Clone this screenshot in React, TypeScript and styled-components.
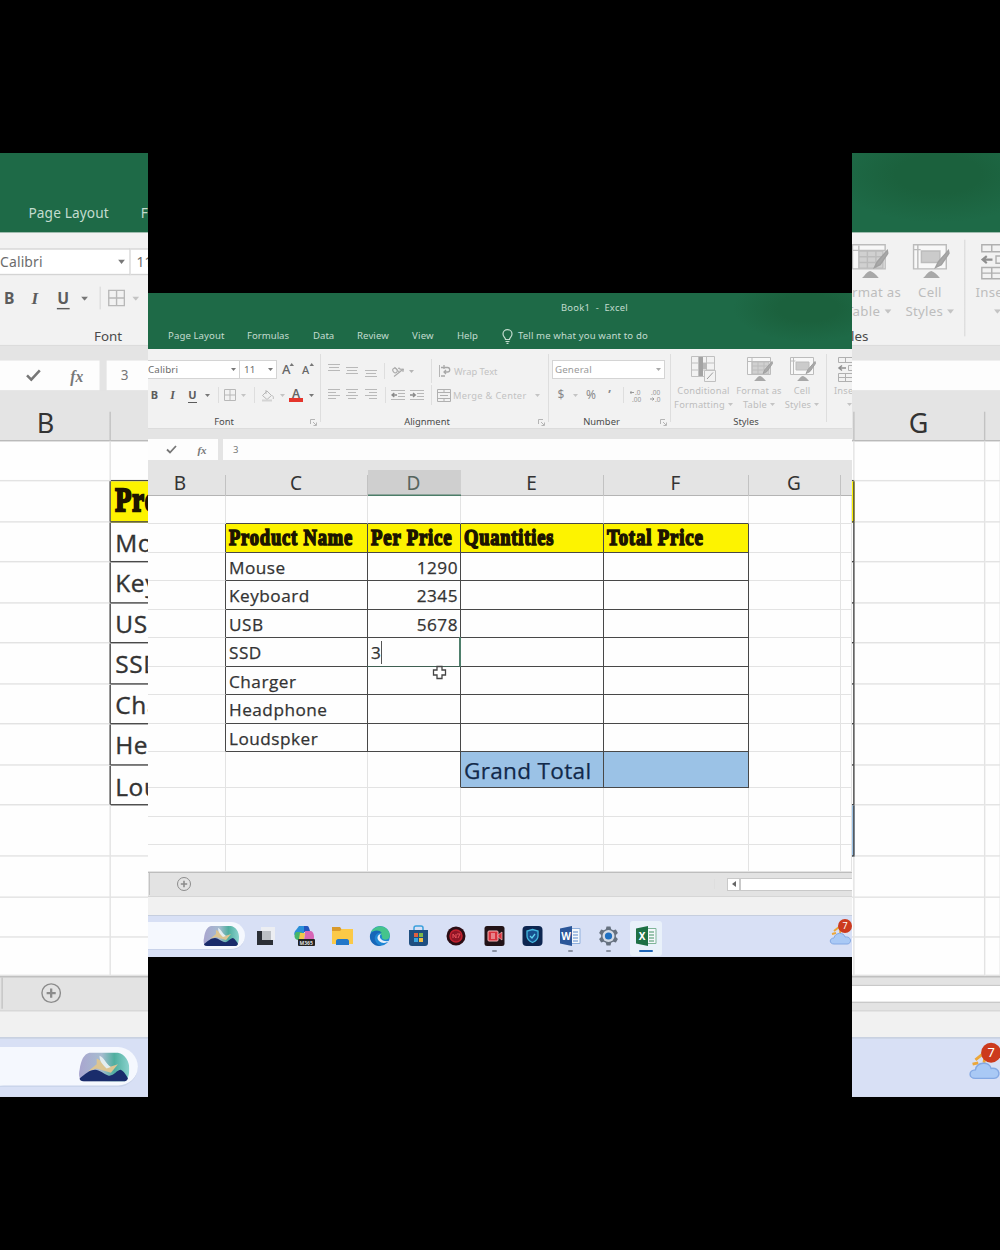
import type { ReactNode } from 'react';
import styled, { createGlobalStyle } from 'styled-components';

const GlobalStyle = createGlobalStyle`
  * {
    box-sizing: border-box;
  }

  body {
    margin: 0;
    background: #000;
  }
`;

const UI_FONT = "'Noto Sans', 'Open Sans', sans-serif";
const CELL_FONT = "'Open Sans', 'Noto Sans', sans-serif";

const Stage = styled.div`
  display: grid;
  grid-template-columns: 148px 704px 148px;
  width: 1000px;
  height: 1250px;
  background: #000;
  overflow: hidden;
`;

const Front = styled.div`
  padding-top: 293px;
`;

// enlarged slice of the same window, cropped to the strip beside it
const Strip = styled.div<{ $side: 'left' | 'right' }>`
  display: flex;
  justify-content: ${props => props.$side === 'left' ? 'flex-start' : 'flex-end'};
  align-items: flex-start;
  height: 1250px;
  padding-top: 153px;
  overflow: hidden;

  > * {
    transform: translateX(${props => props.$side === 'left' ? 0 : 1}px) scale(1.4215);
    transform-origin: top ${props => props.$side};
  }
`;

const Window = styled.div`
  flex: none;
  width: 704px;
  height: 663.5px;
  overflow: hidden;
  position: relative;
  display: flex;
  flex-direction: column;
  background: #e4e4e4;
  font-family: ${UI_FONT};
`;

/* ---------- title + tabs ---------- */

const Header = styled.header`
  height: 56px;
  flex: none;
  background:
    radial-gradient(ellipse 75px 34px at 660px 15px, #1b613d 40%, transparent 100%),
    #1e6a47;
  color: #c3dccf;
`;

const Title = styled.div`
  height: 29px;
  line-height: 29px;
  padding-left: 413px;
  font-size: 9.4px;
  letter-spacing: 0.28px;
  white-space: pre;
`;

const Tabs = styled.nav`
  display: grid;
  grid-template-columns: 79px 66px 44px 55px 45px 45px 16px auto;
  padding: 1px 0 0 20px;
  height: 27px;
  align-items: center;
  font-size: 9.6px;
  line-height: 26px;
  white-space: nowrap;

  svg {
    display: block;
  }
`;

const Tab = styled.span<{ $spacing?: number }>`
  letter-spacing: ${props => props.$spacing ?? 0}px;
`;

/* ---------- ribbon ---------- */

const Ribbon = styled.div`
  display: flex;
  flex: none;
  height: 80px;
  background: #f2f2f2;
  border-bottom: 1px solid #dcdcdc;
`;

const Group = styled.section<{ $width: number }>`
  width: ${props => props.$width}px;
  flex: none;
  height: 79px;
  padding-top: 10px;
  overflow: hidden;
  background: linear-gradient(#dedede, #dedede) right 5px / 1px 68px no-repeat;
`;

const ToolRow = styled.div<{ $cols: string; $indent?: number }>`
  display: grid;
  grid-template-columns: ${props => props.$cols};
  padding-left: ${props => props.$indent ?? 0}px;
  height: 20px;
  margin-bottom: 6px;
  align-items: center;
  justify-items: center;

  svg {
    display: block;
  }
`;

const GroupFooter = styled.div<{ $shift?: number }>`
  position: relative;
  height: 14px;
  margin-top: 10px;
  line-height: 14px;
  font-size: 9.4px;
  text-align: center;
  color: #4a4a4a;
  padding-right: ${props => props.$shift ?? 0}px;

  svg {
    position: absolute;
    right: 4px;
    top: 4px;
  }
`;

const ComboBox = styled.div<{ $dim?: boolean; $inset?: number }>`
  display: flex;
  justify-content: space-between;
  align-items: center;
  justify-self: stretch;
  height: 19px;
  padding: 0 3px 0 ${props => props.$inset ?? 0}px;
  background: #fff;
  border: 1px solid #d4d4d4;
  border-left-width: ${props => props.$dim ? '1px' : 0};
  font-size: 9.8px;
  letter-spacing: 0.1px;
  color: ${props => props.$dim ? '#9a9a9a' : '#6c6c6c'};
`;

const Glyph = styled.span<{ $size?: number; $color?: string; $bold?: boolean; $italic?: boolean; $line?: boolean }>`
  font-size: ${props => props.$size ?? 11}px;
  line-height: 14px;
  color: ${props => props.$color ?? '#5c5c5c'};
  font-weight: ${props => props.$bold ? 700 : 400};
  font-style: ${props => props.$italic ? 'italic' : 'normal'};
  font-family: ${props => props.$italic ? "'Liberation Serif', serif" : 'inherit'};
  border-bottom: ${props => props.$line ? '1px solid #5c5c5c' : 'none'};
  white-space: nowrap;
`;

const FontColor = styled.span`
  width: 14px;
  height: 14px;
  border-bottom: 4px solid #e5352c;
  font-size: 12px;
  line-height: 11px;
  font-weight: 600;
  text-align: center;
  color: #666;
`;

const Divider = styled.i<{ $height?: number }>`
  width: 1px;
  height: ${props => props.$height ?? 16}px;
  background: #dedede;
`;

const DimLabel = styled.span<{ $spacing?: number }>`
  justify-self: start;
  font-size: 9.3px;
  letter-spacing: ${props => props.$spacing ?? 0}px;
  color: #c2c2c2;
  white-space: nowrap;
`;

const BigButtons = styled.div<{ $cols: string; $indent: number }>`
  display: grid;
  grid-template-columns: ${props => props.$cols};
  padding-left: ${props => props.$indent}px;
  height: 50px;
  margin-top: -4px;
`;

const BigButton = styled.div`
  display: flex;
  flex-direction: column;
  align-items: center;
  font-size: 9.3px;
  line-height: 14px;
  letter-spacing: 0.2px;
  text-align: center;
  white-space: nowrap;
  color: #bdbdbd;

  > svg {
    flex: none;
    margin-bottom: 1px;
  }

  span svg {
    margin-left: 3px;
    vertical-align: 2px;
  }
`;

/* ---------- formula bar ---------- */

const FormulaBar = styled.div`
  display: grid;
  grid-template-columns: 70px 1fr;
  column-gap: 5px;
  flex: none;
  height: 31px;
  padding-top: 10px;
  background: #e4e4e4;
`;

const FormulaTools = styled.div`
  display: grid;
  grid-template-columns: 46px 16px;
  justify-items: center;
  align-items: center;
  background: #fdfdfd;
`;

const FormulaInput = styled.div`
  padding-left: 10px;
  line-height: 21px;
  font-size: 9.5px;
  color: #777;
  background: #fdfdfd;
`;

/* ---------- sheet ---------- */

const COL_WIDTHS = [78, 142, 93, 143, 145, 92, 11];
const COLUMNS = COL_WIDTHS.map(w => `${w}px`).join(' ');

const ColumnHeads = styled.div`
  display: grid;
  grid-template-columns: ${COLUMNS};
  flex: none;
  height: 36px;
  padding-top: 10px;
  background: #e4e4e4;
  border-bottom: 1px solid #b4b4b4;
`;

const ColumnHead = styled.div<{ $active?: boolean; $shift?: number }>`
  padding-right: ${props => props.$shift ?? 2}px;
  text-align: center;
  font-family: ${UI_FONT};
  font-size: 19px;
  line-height: 26px;
  color: ${props => props.$active ? '#56645d' : '#333'};
  background: ${props => props.$active
    ? '#cfcfcf'
    : 'linear-gradient(#c2c2c2, #c2c2c2) right 5px / 1px 21px no-repeat'};
  box-shadow: ${props => props.$active ? 'inset 0 -1.5px 0 #4c7d68' : 'none'};
`;

const Sheet = styled.div`
  display: grid;
  flex: none;
  grid-template-columns: ${COLUMNS};
  grid-template-rows: 28px 29px 28px 29px 28px 29px 28px 29px 28px 36px 29px 28px 27px;
  height: 376px;
  background: #fefefe;
`;

type Kind = 'plain' | 'head' | 'total';

const FILL: Record<Kind, string> = {
  plain: 'transparent',
  head: '#fdf300',
  total: '#9bc2e6',
};

const Cell = styled.div<{ $kind: Kind; $darkRight: boolean; $darkBottom: boolean; $numeric: boolean }>`
  position: relative;
  min-width: 0;
  padding: 0 ${props => props.$numeric ? 2 : 3}px 0 3px;
  white-space: nowrap;
  background: ${props => FILL[props.$kind]};
  border-right: 1px solid ${props => props.$darkRight ? '#484848' : '#e3e3e3'};
  border-bottom: 1px solid ${props => props.$darkBottom ? '#484848' : '#e3e3e3'};
  text-align: ${props => props.$numeric ? 'right' : 'left'};
  font-family: ${CELL_FONT};
  font-size: ${props => props.$kind === 'total' ? 22.6 : 17.2}px;
  letter-spacing: ${props => props.$kind === 'total' ? 0.3 : 0.5}px;
  line-height: ${props => props.$kind === 'total' ? 37 : 29}px;
  color: ${props => props.$kind === 'total' ? '#12294a' : '#333'};
  -webkit-text-stroke: 0.25px;
`;

const HeadText = styled.span<{ $squeeze: number }>`
  display: inline-block;
  transform: scaleX(${props => props.$squeeze});
  transform-origin: left center;
  font-family: 'Liberation Serif', serif;
  font-weight: 700;
  font-size: 23px;
  letter-spacing: 1px;
  line-height: 27px;
  color: #1c1400;
  -webkit-text-stroke: 1.6px #1c1400;
`;

const Caret = styled.i`
  display: inline-block;
  width: 1px;
  height: 23px;
  margin-left: 0;
  vertical-align: -5px;
  background: #555;
`;

const ActiveFrame = styled.div`
  position: absolute;
  inset: -1px;
  border-right: 2px solid #4f7f6c;
  border-bottom: 1px solid #3f5f52;
`;

const Pointer = styled.svg`
  position: absolute;
  left: 284px;
  top: 372px;
`;

/* ---------- bottom bars ---------- */

const SheetTabs = styled.div`
  display: grid;
  grid-template-columns: 2px 68px 1fr 13px 13px 112px;
  align-items: center;
  flex: none;
  height: 25px;
  padding-bottom: 1px;
  background: #e3e3e3;
  border-top: 1px solid #bdbdbd;
  border-bottom: 1px solid #d6d6d6;
`;

const TabEdge = styled.i`
  height: 22px;
  border-right: 1px solid #c4c4c4;
`;

const ScrollArrow = styled.div`
  display: grid;
  place-items: center;
  height: 13px;
  background: #fff;
  border: 1px solid #c9c9c9;
`;

const ScrollThumb = styled.div`
  height: 13px;
  background: #fff;
  border: 1px solid #c9c9c9;
  border-right: 0;
`;

const StatusBar = styled.div`
  flex: none;
  height: 18px;
  background: #f1f1f1;
`;

const Taskbar = styled.div`
  display: grid;
  grid-template-columns: 97px 39px repeat(10, 38px) 1fr;
  flex: none;
  height: 41.5px;
  border-top: 1px solid #c6cede;
  background: #d8e0f5;
`;

const SearchBox = styled.div`
  display: flex;
  align-items: center;
  justify-content: flex-end;
  height: 28px;
  margin-top: 6px;
  padding-right: 6px;
  border-radius: 0 14px 14px 0;
  background: #f5f8fe;
  border-bottom: 1px solid #c9d3ea;
`;

const AppSlot = styled.div<{ $active?: boolean }>`
  display: flex;
  flex-direction: column;
  align-items: center;
  height: 35px;
  margin: 5px 2px 0 4px;
  padding-top: 4px;
  border-radius: 3px;
  background: ${props => props.$active ? '#e9f1fa' : 'transparent'};

  svg {
    display: block;
  }
`;

const RunMark = styled.i<{ $active?: boolean }>`
  width: ${props => props.$active ? 14 : 5}px;
  height: 2.4px;
  margin-top: 2.5px;
  border-radius: 2px;
  background: ${props => props.$active ? '#1f66b8' : '#8b93a3'};
`;

const Weather = styled.div`
  position: relative;
  justify-self: end;
  width: 23px;
  height: 30px;
  margin-top: 3px;
`;

const Badge = styled.span`
  position: absolute;
  left: 9px;
  top: 0;
  width: 14px;
  height: 14px;
  border-radius: 50%;
  background: #cc3a1e;
  color: #fff;
  font-size: 9px;
  line-height: 14px;
  text-align: center;
`;

/* ---------- icons ---------- */

const Arrow = ({ color = '#777' }: { color?: string }) => (
  <svg width="5" height="3" viewBox="0 0 5 3"><path d="M0 0h5L2.5 3z" fill={color} /></svg>
);

const Lines = ({ rows, y = 1 }: { rows: [number, number][]; y?: number }) => (
  <svg width="13" height="14" viewBox="0 0 13 14" stroke="#b9b9b9" strokeWidth="1">
    {rows.map(([x1, x2], i) => (
      <path key={i} d={`M${x1} ${y + i * 3 + 0.5}H${x2}`} />
    ))}
  </svg>
);

const Launcher = () => (
  <svg width="7" height="7" viewBox="0 0 7 7" fill="none" stroke="#b5b5b5">
    <path d="M.5 5V.5H5M3 3l3 3M6.5 3.5v3h-3" />
  </svg>
);

const GrowA = ({ size }: { size: number }) => (
  <svg width="14" height="15" viewBox="0 0 14 15">
    <text x="1" y="12" fontSize={size} fill="#666" fontFamily="Noto Sans" fontWeight="500">A</text>
    <path d="M8.5 4 10.7 1 13 4z" fill="#777" />
  </svg>
);

const Borders = () => (
  <svg width="12" height="12" viewBox="0 0 12 12" fill="none" stroke="#b8b8b8">
    <path d="M.5.5h11v11H.5zM6 .5v11M.5 6h11" />
  </svg>
);

const Bucket = () => (
  <svg width="14" height="13" viewBox="0 0 14 13" fill="none" stroke="#b8b8b8">
    <path d="M1.5 6.500 6 2l4.500 4.500-4.500 4zM5 1v4M11.500 6.500c1 1.500 1.200 2.500.6 3.500" />
    <path d="M1 11.500h10" stroke="#d4d4d4" strokeWidth="2" />
  </svg>
);

const Orientation = () => (
  <svg width="14" height="13" viewBox="0 0 14 13" fill="none" stroke="#acacac" strokeWidth="1.100">
    <path d="M3 11.500 12.500 4M12.500 4l-3 .2M12.500 4l-.6 3" />
    <ellipse cx="4" cy="5.500" rx="2" ry="2.500" transform="rotate(-40 4 5.500)" />
    <path d="M3.500 2 8.500 7.500M7 3.500c1.500-1 3 .5 1.800 2" />
  </svg>
);

const Indent = ({ flip }: { flip?: boolean }) => (
  <svg width="14" height="12" viewBox="0 0 14 12" fill="none" stroke="#b8b8b8">
    <path d="M0 1.500h14M7 4.500h7M7 7.500h7M0 10.500h14" />
    <path d={flip ? 'M0 6h5M3 4 5.300 6 3 8' : 'M1 6h5M3.300 4 1 6l2.300 2'} stroke="#8a8a8a" strokeWidth="1.300" />
  </svg>
);

const WrapIcon = () => (
  <svg width="13" height="14" viewBox="0 0 13 14" fill="none" stroke="#b5b5b5">
    <path d="M1.500 1v12" />
    <path d="M3 3.500h6.500c3 0 3 4.500 0 4.500H6M8 6 6 8l2 2M6 1v4M3 12h4" stroke="#a8a8a8" strokeWidth="1.300" />
  </svg>
);

const MergeIcon = () => (
  <svg width="14" height="13" viewBox="0 0 14 13" fill="none" stroke="#b0b0b0">
    <path d="M.5.5h13v12H.5zM.5 3.500h13M.5 9.500h13M7 .5v3M7 9.500v3M3 6.500h8" />
  </svg>
);

const Decimals = ({ right }: { right?: boolean }) => (
  <svg width="13" height="13" viewBox="0 0 13 13">
    <text x={right ? 1 : 5} y="6" fontSize="6.500" fill="#999" fontFamily="Noto Sans">{right ? '.00' : '.0'}</text>
    <text x={right ? 5 : 2} y="12.500" fontSize="6.500" fill="#999" fontFamily="Noto Sans">{right ? '.0' : '.00'}</text>
    <path d={right ? 'M0 10h4M2.500 8.500 4 10l-1.500 1.500' : 'M0 3.500h4M1.500 2 0 3.500 1.500 5'} stroke="#999" fill="none" />
  </svg>
);

const ConditionalIcon = () => (
  <svg width="27" height="28" viewBox="0 0 27 28" fill="none" stroke="#c0c0c0">
    <path d="M1.500 1.500h23v20h-23zM8.500 1.500v20M16.500 1.500v20M1.500 8h23M1.500 15h23" />
    <path d="M9 2h4v19H9z" fill="#a3a3a3" stroke="none" />
    <path d="M13 8h4v6h-4z" fill="#b8b8b8" stroke="none" />
    <path d="M14.500 15.500h11v11h-11z" fill="#f2f2f2" />
    <path d="M17 24l6-6.500" stroke="#9c9c9c" />
  </svg>
);

const BrushIcon = ({ cell }: { cell?: boolean }) => (
  <svg width="27" height="28" viewBox="0 0 27 28" fill="none" stroke="#bcbcbc">
    <path d="M1.500 2.500h23v17h-23z" fill="#f8f8f8" />
    {cell
      ? <path d="M1.500 6h5M4.500 2.500v17M7 7h13v8H7z" fill="#cbcbcb" />
      : <path d="M6 7h17v12H6zM1.500 6.500h23M6 3v16M12 7v12M18 7v12M6 11h17M6 15h17" fill="#d0d0d0" />}
    <path d="M26 6.500 19 14.500l-2 4 4-2 5.500-8z" fill="#a8a8a8" stroke="#a0a0a0" />
    <path d="M8 26c2-1 3-4.500 6-5 2 .5 4 2.500 6 5z" fill="#a8a8a8" stroke="none" />
  </svg>
);

const InsertIcon = () => (
  <svg width="24" height="28" viewBox="0 0 24 28" fill="none" stroke="#b0b0b0">
    <path d="M2.500 2.500h14v5h-14zM9.500 2.500v5M12.500 10.500h11v5h-11zM2.500 18.500h14v8h-14zM9.500 18.500v8M2.500 22.500h14" />
    <path d="M3 13h7M6 10.500 3 13l3 2.500" stroke="#8f8f8f" strokeWidth="1.500" />
  </svg>
);

const Preview = () => (
  <svg width="36" height="22" viewBox="0 0 36 22">
    <defs>
      <linearGradient id="sky" x1="0" x2="1" y1="0" y2="0">
        <stop offset="0" stopColor="#a9a5cf" />
        <stop offset="0.45" stopColor="#a6bcd0" />
        <stop offset="0.7" stopColor="#4fae9f" />
        <stop offset="1" stopColor="#8ad2cd" />
      </linearGradient>
    </defs>
    <path d="M8 1h20c5 1 8 6 8 11 0 4-1 8-3 9H3c-2-1-3-4-2-8C2 6 4 2 8 1z" fill="url(#sky)" />
    <path d="M13 5c3 1 4 4 9 6l6-2-5 6-10-3-6 2 6-5z" fill="#dcc592" />
    <path d="M15 3c3 1 4 5 8 8l-3 1c-3-3-5-5-5-9z" fill="#e4edf0" />
    <path d="M1 19c4-3 7-6 11-6 3 0 6 3 9 4 4 1 6-4 9-4 2 1 4 4 5 6-1 2-2 2-4 2H4c-2 0-3-1-3-2z" fill="#1a2c6b" />
  </svg>
);

const TaskView = () => (
  <svg width="21" height="22" viewBox="0 0 21 22">
    <path d="M6 2h14v13H6z" fill="#eceef2" />
    <path d="M2 6h5v9h11v5H2z" fill="#2b2f36" />
    <path d="M7 6h9v9H7z" fill="#bcc0c5" />
  </svg>
);

const Copilot = () => (
  <svg width="22" height="22" viewBox="0 0 22 22">
    <path d="M6 1h7l-3 10H4C0 11 1 7 3 5z" fill="#2a8fd8" />
    <path d="M3 7h6l-2 8H5c-3 0-5-4-2-8z" fill="#45b56a" />
    <path d="M11 1h3c2 0 2 2 3 5l-6 1z" fill="#2355bd" />
    <path d="M12 6h6c3 1 4 7 2 10h-9z" fill="#d765b5" />
    <path d="M7 8h5l-1 6H6z" fill="#f2c64a" />
    <rect x="5" y="14" width="17" height="7" rx="1" fill="#222" />
    <text x="6.500" y="19.500" fontSize="5" fontWeight="700" fill="#ddd" fontFamily="Noto Sans">M365</text>
  </svg>
);

const Folder = () => (
  <svg width="23" height="22" viewBox="0 0 23 22">
    <path d="M1 2h8l2 3h11v14H1z" fill="#d99a2b" />
    <path d="M1 6h8l2-2h11v15H1z" fill="#fbc947" />
    <path d="M5 20v-4c0-1 1-2 2-2h9c1 0 2 1 2 2v4z" fill="#2277c9" />
  </svg>
);

const Edge = () => (
  <svg width="22" height="22" viewBox="0 0 22 22">
    <circle cx="11" cy="11" r="10" fill="#1e86d4" />
    <path d="M2 7c3-6 11-8 16-3 3 3 4 8 1 10-2 1-5 1-6-1 1-5-6-8-11-6z" fill="#45c48c" />
    <path d="M1 10c2-5 9-6 12-2-5-1-8 3-7 7 1 3 3 5 6 6C5 22 0 16 1 10z" fill="#1766b8" />
    <path d="M12 9c-3 3 0 8 8 7-2 2-7 3-10 0s-1-7 2-7z" fill="#e6effa" />
  </svg>
);

const Store = () => (
  <svg width="21" height="22" viewBox="0 0 21 22">
    <path d="M6 6V3c0-1 1-2 2-2h5c1 0 2 1 2 2v3" fill="none" stroke="#3ba0dc" strokeWidth="1.500" />
    <path d="M1 5h19v13c0 2-1 3-3 3H4c-2 0-3-1-3-3z" fill="#1f4f80" />
    <path d="M6 8h4v4H6z" fill="#e2603f" />
    <path d="M11 8h4v4h-4z" fill="#7cb84a" />
    <path d="M6 13h4v4H6z" fill="#38a4dd" />
    <path d="M11 13h4v4h-4z" fill="#f3bd41" />
  </svg>
);

const RedApp = () => (
  <svg width="20" height="22" viewBox="0 0 20 22">
    <circle cx="10" cy="11" r="9.500" fill="#2a0d14" />
    <circle cx="10" cy="11" r="6" fill="#8f1626" stroke="#c3212f" strokeWidth="1.500" />
    <path d="M7 13V9l3 4V9M11 9h3l-2 4" fill="none" stroke="#e9505a" />
  </svg>
);

const Recorder = () => (
  <svg width="21" height="22" viewBox="0 0 21 22">
    <rect x="0.500" y="1" width="20" height="20" rx="2.500" fill="#221317" />
    <rect x="4" y="6" width="10" height="10" rx="1" fill="#d8323c" stroke="#f2b9bb" />
    <path d="M14 10l4-3v8l-4-3z" fill="#d8323c" stroke="#f2b9bb" strokeWidth="0.700" />
    <path d="M7 9h4M7 11h4M7 13h4" stroke="#fff" strokeWidth="0.800" />
  </svg>
);

const Shield = () => (
  <svg width="21" height="22" viewBox="0 0 21 22">
    <rect x="0.500" y="1" width="20" height="20" rx="4" fill="#0d2650" />
    <path d="M10.500 4.500 16 6v5c0 3-2 5-5.500 6.500C7 16 5 14 5 11V6z" fill="#17508f" stroke="#43b8df" strokeWidth="1.300" />
    <path d="M8 11l2 2 3-4" fill="none" stroke="#5fd3ee" strokeWidth="1.300" />
  </svg>
);

const OfficeApp = ({ letter, color, page }: { letter: string; color: string; page: string }) => (
  <svg width="21" height="22" viewBox="0 0 21 22">
    <path d="M10 3.500h10v15H10z" fill="#f4f7fb" stroke={page} />
    <path d="M13 7h5M13 10h5M13 13h5M13 16h5" stroke={page} strokeWidth="1.400" />
    <path d="M0 3.500 12 1v20L0 18.500z" fill={color} />
    <text x="6" y="14.700" fontSize="10" fontWeight="700" fill="#fff" textAnchor="middle" fontFamily="Noto Sans">{letter}</text>
  </svg>
);

const Gear = () => (
  <svg width="21" height="22" viewBox="0 0 21 22">
    <path
      d="M8.500 1.500h4l.7 2.700 2 1.100 2.700-.8 2 3.400-2 2v2.200l2 2-2 3.400-2.700-.8-2 1.100-.7 2.700h-4l-.7-2.700-2-1.100-2.700.8-2-3.400 2-2V9.900l-2-2 2-3.400 2.700.8 2-1.100z"
      fill="#66717f"
    />
    <circle cx="10.500" cy="11" r="6" fill="#d4dbe6" />
    <circle cx="10.500" cy="11" r="3.600" fill="#1f6fc0" />
  </svg>
);

const APPS: { icon: ReactNode; running?: boolean; active?: boolean }[] = [
  { icon: <TaskView /> },
  { icon: <Copilot /> },
  { icon: <Folder /> },
  { icon: <Edge /> },
  { icon: <Store /> },
  { icon: <RedApp /> },
  { icon: <Recorder />, running: true },
  { icon: <Shield /> },
  { icon: <OfficeApp letter="W" color="#2a5699" page="#8fb0dd" />, running: true },
  { icon: <Gear />, running: true },
  { icon: <OfficeApp letter="X" color="#1d7044" page="#7fb598" />, running: true, active: true },
];

/* ---------- data ---------- */

// which parts of the window get their contents drawn
type View = 'all' | 'left' | 'right';

const RANGE: Record<View, [number, number]> = {
  all: [0, 704],
  left: [0, 105],
  right: [604, 704],
};

const sees = (view: View, from: number, to: number) =>
  from < RANGE[view][1] && to > RANGE[view][0];

const seesColumn = (view: View, c: number) => {
  const from = COL_WIDTHS.slice(0, c).reduce((sum, w) => sum + w, 0);
  return sees(view, from, from + COL_WIDTHS[c] - 4);
};

const HEADS: Record<number, { label: string; squeeze: number }> = {
  1: { label: 'Product Name', squeeze: 0.805 },
  2: { label: 'Per Price', squeeze: 0.815 },
  3: { label: 'Quantities', squeeze: 0.803 },
  4: { label: 'Total Price', squeeze: 0.818 },
};

const PRODUCTS: [string, string][] = [
  ['Mouse', '1290'],
  ['Keyboard', '2345'],
  ['USB', '5678'],
  ['SSD', ''],
  ['Charger', ''],
  ['Headphone', ''],
  ['Loudspker', ''],
];

const ROW_COUNT = 13;
const COL_COUNT = 7;

const inTable = (r: number, c: number) =>
  (r >= 1 && r <= 8 && c >= 1 && c <= 4) || (r === 9 && (c === 3 || c === 4));

const kindOf = (r: number, c: number): Kind => {
  if (!inTable(r, c)) return 'plain';
  if (r === 1) return 'head';
  return r === 9 ? 'total' : 'plain';
};

function cellContent(r: number, c: number): ReactNode {
  if (r === 1 && HEADS[c]) {
    return <HeadText $squeeze={HEADS[c].squeeze}>{HEADS[c].label}</HeadText>;
  }
  if (r === 5 && c === 2) return <>3<Caret /><ActiveFrame /></>;
  if (r === 9 && c === 3) return 'Grand Total';
  if (r >= 2 && r <= 8 && (c === 1 || c === 2)) return PRODUCTS[r - 2][c - 1];
  return null;
}

const TABS: { label: string; x: number; spacing?: number }[] = [
  { label: 'Page Layout', x: 20, spacing: 0.1 },
  { label: 'Formulas', x: 99 },
  { label: 'Data', x: 165 },
  { label: 'Review', x: 209, spacing: 0.1 },
  { label: 'View', x: 264, spacing: 0.2 },
  { label: 'Help', x: 309 },
];

function FontTools() {
  return (
    <>
      <ToolRow $cols="92px 37px 22px 17px">
        <ComboBox>Calibri<Arrow /></ComboBox>
        <ComboBox $inset={4}>11<Arrow /></ComboBox>
        <GrowA size={13} />
        <GrowA size={11} />
      </ToolRow>
      <ToolRow $cols="13px 23px 17px 12px 10px 14px 12px 10px 18px 10px 18px 12px">
        <Glyph $bold>B</Glyph>
        <Glyph $bold $italic $size={12}>I</Glyph>
        <Glyph $bold $line>U</Glyph>
        <Arrow />
        <Divider />
        <Borders />
        <Arrow color="#c4c4c4" />
        <Divider />
        <Bucket />
        <Arrow color="#c4c4c4" />
        <FontColor>A</FontColor>
        <Arrow />
      </ToolRow>
      <GroupFooter $shift={21}>Font<Launcher /></GroupFooter>
    </>
  );
}

function AlignmentTools() {
  return (
    <>
      <ToolRow $indent={4} $cols="18px 18px 20px 7px 20px 6px 14px 6px 20px auto 1fr">
        <Lines rows={[[0, 12], [1, 11], [0, 12]]} y={0} />
        <Lines rows={[[0, 12], [1, 11], [0, 12]]} y={3} />
        <Lines rows={[[0, 12], [1, 11], [0, 12]]} y={6} />
        <Divider />
        <Orientation />
        <Arrow color="#b5b5b5" />
        <span />
        <Divider $height={24} />
        <WrapIcon />
        <DimLabel>Wrap Text</DimLabel>
      </ToolRow>
      <ToolRow $indent={4} $cols="18px 18px 20px 8px 18px 20px 8px 18px 78px 12px">
        <Lines rows={[[0, 12], [0, 8], [0, 12], [0, 8]]} />
        <Lines rows={[[0, 12], [2, 10], [0, 12], [2, 10]]} />
        <Lines rows={[[0, 12], [4, 12], [0, 12], [4, 12]]} />
        <Divider />
        <Indent />
        <Indent flip />
        <Divider $height={20} />
        <MergeIcon />
        <DimLabel $spacing={0.3}>Merge &amp; Center</DimLabel>
        <Arrow color="#c4c4c4" />
      </ToolRow>
      <GroupFooter $shift={16}>Alignment<Launcher /></GroupFooter>
    </>
  );
}

function NumberTools() {
  return (
    <>
      <ToolRow $indent={3} $cols="113px">
        <ComboBox $dim $inset={2}>General<Arrow color="#aaa" /></ComboBox>
      </ToolRow>
      <ToolRow $indent={3} $cols="18px 10px 22px 15px 13px 13px 26px">
        <Glyph $size={12} $color="#8a8a8a">$</Glyph>
        <Arrow color="#c4c4c4" />
        <Glyph $size={12} $color="#8a8a8a">%</Glyph>
        <Glyph $size={12} $color="#8a8a8a" $bold>’</Glyph>
        <Divider />
        <Decimals />
        <Decimals right />
      </ToolRow>
      <GroupFooter $shift={17}>Number<Launcher /></GroupFooter>
    </>
  );
}

function StyleTools({ view }: { view: View }) {
  return (
    <>
      <BigButtons $indent={2} $cols="61px 50px 36px">
        <BigButton>
          {view === 'all' && (
            <>
              <ConditionalIcon />
              <span>Conditional</span>
              <span>Formatting<Arrow color="#c4c4c4" /></span>
            </>
          )}
        </BigButton>
        <BigButton>
          <BrushIcon />
          <span>Format as</span>
          <span>Table<Arrow color="#c4c4c4" /></span>
        </BigButton>
        <BigButton>
          <BrushIcon cell />
          <span>Cell</span>
          <span>Styles<Arrow color="#c4c4c4" /></span>
        </BigButton>
      </BigButtons>
      <GroupFooter $shift={6}>Styles</GroupFooter>
    </>
  );
}

function RibbonBar({ view }: { view: View }) {
  return (
    <Ribbon>
      <Group $width={173}>{sees(view, 0, 173) && <FontTools />}</Group>
      <Group $width={228}>{sees(view, 173, 401) && <AlignmentTools />}</Group>
      <Group $width={122}>{sees(view, 401, 523) && <NumberTools />}</Group>
      <Group $width={156}>{sees(view, 523, 679) && <StyleTools view={view} />}</Group>
      <Group $width={35}>
        {sees(view, 679, 704) && (
          <BigButtons $indent={7} $cols="27px">
            <BigButton>
              <InsertIcon />
              <span>Insert</span>
              <span><Arrow color="#c4c4c4" /></span>
            </BigButton>
          </BigButtons>
        )}
      </Group>
    </Ribbon>
  );
}

function SheetGrid({ view }: { view: View }) {
  const cells: ReactNode[] = [];
  for (let r = 0; r < ROW_COUNT; r++) {
    for (let c = 0; c < COL_COUNT; c++) {
      cells.push(
        <Cell
          key={`${r}-${c}`}
          $kind={kindOf(r, c)}
          $darkRight={inTable(r, c) || inTable(r, c + 1)}
          $darkBottom={inTable(r, c) || inTable(r + 1, c)}
          $numeric={c === 2 && r >= 2 && r <= 4}
        >
          {seesColumn(view, c) && cellContent(r, c)}
        </Cell>
      );
    }
  }
  return <Sheet>{cells}</Sheet>;
}

function ExcelWindow({ view = 'all' }: { view?: View }) {
  return (
    <Window>
      <Header>
        <Title>{view === 'all' && 'Book1  -  Excel'}</Title>
        <Tabs>
          {TABS.map(tab => (
            <Tab key={tab.label} $spacing={tab.spacing}>
              {sees(view, tab.x, tab.x + 40) && tab.label}
            </Tab>
          ))}
          {view === 'all' && (
            <>
              <svg width="11" height="15" viewBox="0 0 11 15" fill="none" stroke="#c3dccf" strokeWidth="1.200">
                <path d="M3.500 10.500C3.500 8.500 1 8 1 5a4.500 4.300 0 0 1 9 0c0 3-2.500 3.500-2.500 5.500zM3.500 12.500h4M4.500 14.300h2" />
              </svg>
              <Tab $spacing={0.12}>Tell me what you want to do</Tab>
            </>
          )}
        </Tabs>
      </Header>

      <RibbonBar view={view} />

      <FormulaBar>
        <FormulaTools>
          {sees(view, 0, 70) && (
            <>
              <svg width="11" height="9" viewBox="0 0 11 9" fill="none" stroke="#777" strokeWidth="1.800">
                <path d="M1 4.500 4 7.500 10 1" />
              </svg>
              <Glyph $italic $bold $size={11} $color="#777">fx</Glyph>
            </>
          )}
        </FormulaTools>
        <FormulaInput>{sees(view, 75, 100) && '3'}</FormulaInput>
      </FormulaBar>

      <ColumnHeads>
        {['B', 'C', 'D', 'E', 'F', 'G'].map((name, c) => (
          <ColumnHead key={name} $active={name === 'D'} $shift={name === 'B' ? 14 : 2}>
            {(view === 'all' || (view === 'left' ? c === 0 : c === 5)) && name}
          </ColumnHead>
        ))}
      </ColumnHeads>

      <SheetGrid view={view} />

      <SheetTabs>
        <TabEdge />
        <svg width="68" height="16" viewBox="0 0 68 16" fill="none" stroke="#8c8c8c">
          <circle cx="34" cy="8" r="6.500" />
          <path d="M34 4.800v6.400M30.800 8h6.400" strokeWidth="1.600" />
        </svg>
        <span />
        <Divider $height={10} />
        <ScrollArrow>
          <svg width="4" height="6" viewBox="0 0 4 6"><path d="M4 0v6L0 3z" fill="#666" /></svg>
        </ScrollArrow>
        <ScrollThumb />
      </SheetTabs>
      <StatusBar />

      <Taskbar>
        <SearchBox><Preview /></SearchBox>
        {APPS.map((app, i) => (
          <AppSlot key={i} $active={app.active}>
            {view === 'all' && app.icon}
            {view === 'all' && app.running && <RunMark $active={app.active} />}
          </AppSlot>
        ))}
        {sees(view, 680, 704) && (
          <Weather>
            <svg width="23" height="28" viewBox="0 0 23 28">
              <path d="M5 12l5-4M3 15l4-1M12 8l-1 6" stroke="#eba73a" strokeWidth="2" />
              <path d="M5 25c-5 0-5-6 0-6 1-6 10-6 11-1 7-1 7 7 2 7z" fill="#a9c9f5" stroke="#84a9e4" />
            </svg>
            <Badge>7</Badge>
          </Weather>
        )}
      </Taskbar>

      {view === 'all' && (
        <Pointer width="15" height="15" viewBox="0 0 15 15">
          <path d="M5 1.500h5v3.500h3.500v5H10v3.500H5V10H1.500V5H5z" fill="#fff" stroke="#444" strokeWidth="1.300" />
        </Pointer>
      )}
    </Window>
  );
}

export default function App() {
  return (
    <>
      <GlobalStyle />
      <Stage>
        <Strip $side="left"><ExcelWindow view="left" /></Strip>
        <Front><ExcelWindow /></Front>
        <Strip $side="right"><ExcelWindow view="right" /></Strip>
      </Stage>
    </>
  );
}
